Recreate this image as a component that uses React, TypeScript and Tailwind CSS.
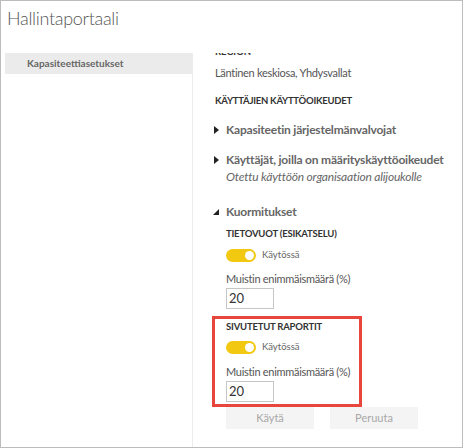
const font = { fontFamily: 'Lato, "Noto Sans", sans-serif' };

function Caret({ open }: { open?: boolean }) {
  if (open) {
    return (
      <svg width="6" height="6" viewBox="0 0 6 6" className="-ml-[2px] mr-[7px] shrink-0">
        <path d="M6 0 L6 6 L0 6 Z" fill="#222" />
      </svg>
    );
  }
  return (
    <svg width="5" height="8" viewBox="0 0 5 8" className="-ml-[1px] mr-[7px] shrink-0">
      <path d="M0 0 L5 4 L0 8 Z" fill="#222" />
    </svg>
  );
}

function Toggle() {
  return (
    <div className="flex h-[16px] items-center">
      <div className="flex h-[13px] w-[30px] items-center justify-end rounded-full bg-[#f2c811] pr-[2px]">
        <div className="h-[9px] w-[9px] rounded-full bg-white" />
      </div>
      <span className="ml-[6px] text-[9.5px] text-[#666]">Käytössä</span>
    </div>
  );
}

function LoadSection({ title, first }: { title: string; first?: boolean }) {
  return (
    <div className="flex flex-col">
      <div className={`${first ? "mt-[5px]" : "mt-[11px]"} h-[14px] text-[9.5px] font-bold leading-[14px] tracking-[-0.2px] text-[#333]`}>
        {title}
      </div>
      <div className={first ? "mt-[6px]" : "mt-[5px]"}>
        <Toggle />
      </div>
      <div className={`${first ? "mt-[8px]" : "mt-[9px]"} h-[16px] text-[11px] leading-[16px] tracking-[-0.3px] text-[#555]`}>
        Muistin enimmäismäärä (%)
      </div>
      <div className="mt-[1px] flex h-[21px] w-[48px] items-center border border-[#c6c6c6] pl-[2px] text-[13px] text-[#333]">
        20
      </div>
    </div>
  );
}

export default function App() {
  return (
    <div
      style={font}
      className="flex h-[448px] w-[463px] flex-col overflow-hidden border border-[#bcbcbc] bg-white"
    >
      <header className="h-[52px] pl-[6px] pt-[4px] text-[18px] font-light leading-[26px] tracking-[-0.3px] text-[#555]">
        Hallintaportaali
      </header>
      <div className="flex min-h-0 flex-1">
        <aside className="ml-[4px] w-[187px] shrink-0">
          <div className="flex h-[21px] items-center bg-[#ebebeb] pl-[22px] text-[10px] font-bold text-[#666]">
            Kapasiteettiasetukset
          </div>
        </aside>
        <main className="flex-1 overflow-hidden whitespace-nowrap border-l border-[#ececec] pl-[22px]">
          <div className="flex flex-col">
            <div className="-mt-[8px] h-[14px] text-[9.5px] font-bold leading-[14px] text-[#333]">REGION</div>
            <div className="mt-[6px] h-[16px] text-[11px] leading-[16px] tracking-[-0.3px] text-[#555]">
              Läntinen keskiosa, Yhdysvallat
            </div>
            <div className="mt-[13px] h-[14px] text-[9.5px] font-bold leading-[14px] tracking-[-0.25px] text-[#333]">
              KÄYTTÄJIEN KÄYTTÖOIKEUDET
            </div>
            <div className="mt-[12px] flex h-[20px] items-center text-[12px] font-bold tracking-[-0.2px] text-[#666]">
              <Caret />
              Kapasiteetin järjestelmänvalvojat
            </div>
            <div className="mt-[10px] flex h-[20px] items-center text-[12px] font-bold tracking-[-0.2px] text-[#666]">
              <Caret />
              Käyttäjät, joilla on määrityskäyttöoikeudet
            </div>
            <div className="h-[14px] pl-[11px] text-[12px] italic leading-[14px] tracking-[-0.2px] text-[#666]">
              Otettu käyttöön organisaation alijoukolle
            </div>
            <div className="mt-[18px] flex h-[20px] items-center text-[12px] font-bold tracking-[-0.2px] text-[#666]">
              <Caret open />
              Kuormitukset
            </div>
            <div className="flex flex-col pl-[11px]">
              <LoadSection title="TIETOVUOT (ESIKATSELU)" first />
              <div className="relative">
                <LoadSection title="SIVUTETUT RAPORTIT" />
                <div className="pointer-events-none absolute left-[-14px] top-[7px] z-10 h-[91px] w-[150px] border-[3px] border-[#e8453c]" />
              </div>
              <div className="mt-[5px] flex gap-[16px]">
                <button className="h-[22px] w-[88px] bg-[#f4f4f4] text-[11px] text-[#a8a8a8]">Käytä</button>
                <button className="h-[22px] w-[88px] bg-[#f4f4f4] text-[11px] text-[#a8a8a8]">Peruuta</button>
              </div>
            </div>
          </div>
        </main>
      </div>
    </div>
  );
}
